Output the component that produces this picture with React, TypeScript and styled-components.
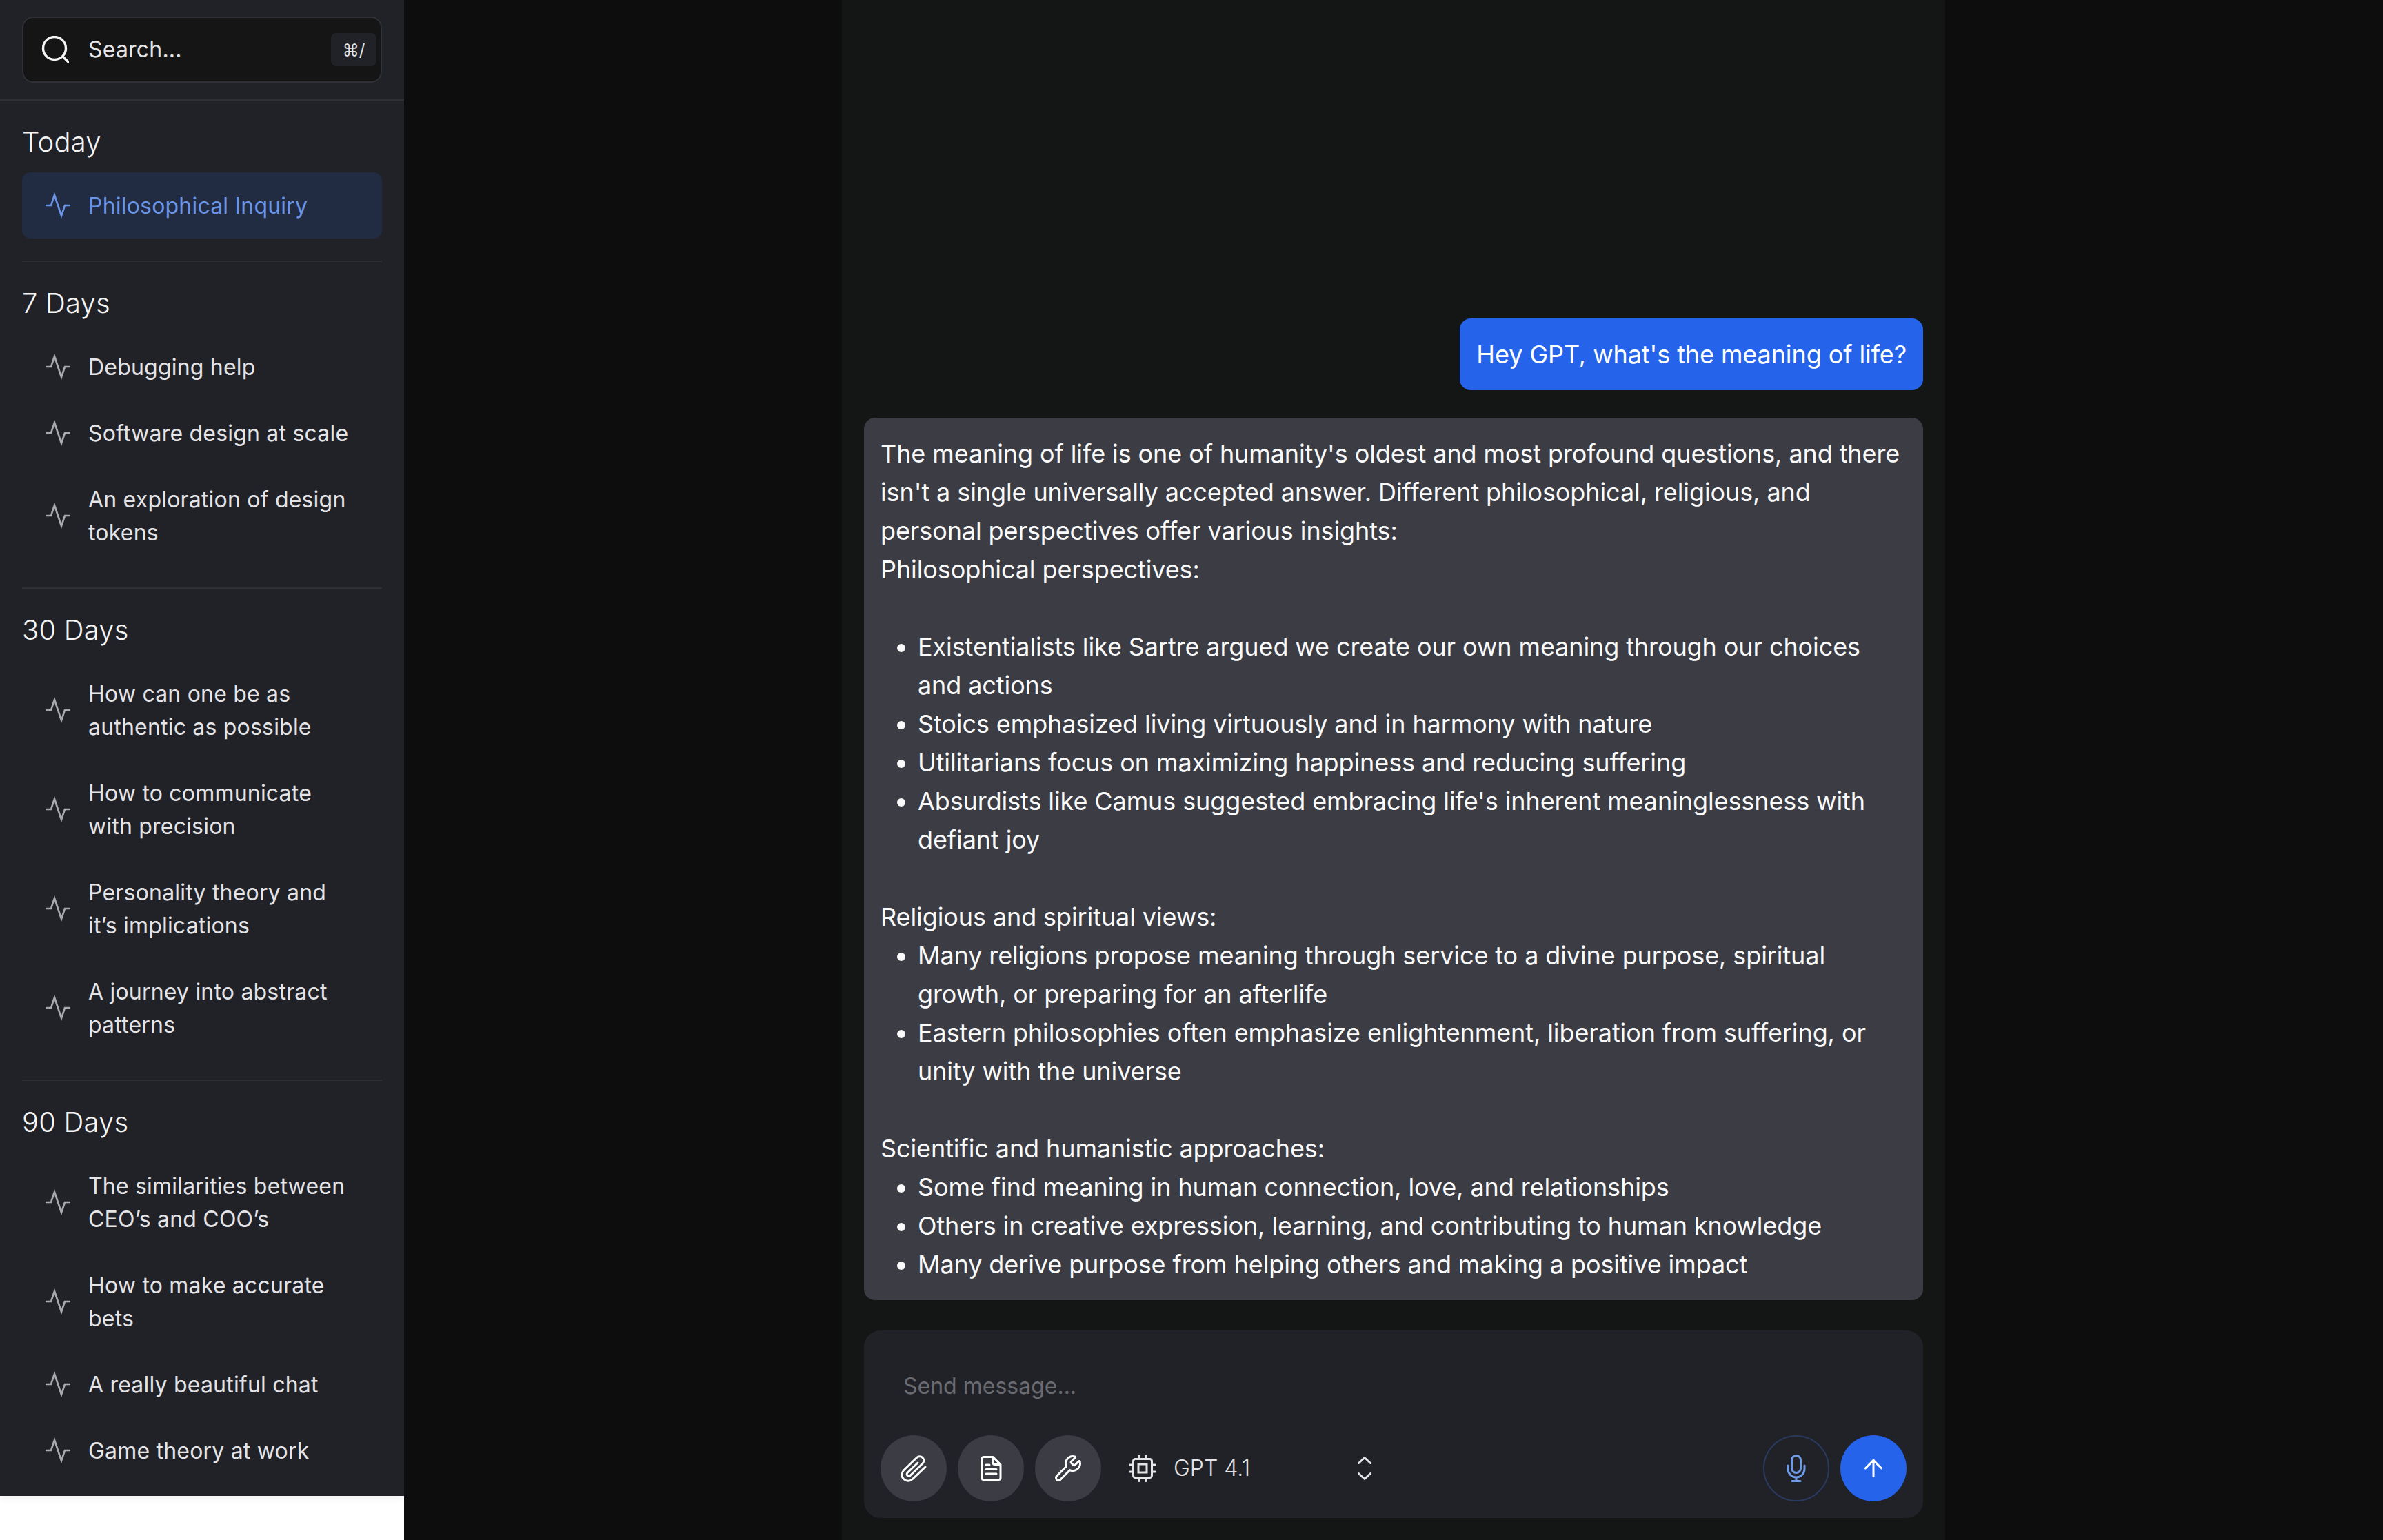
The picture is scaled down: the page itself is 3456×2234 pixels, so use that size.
import React from "react"
import styled, { createGlobalStyle } from "styled-components"
import { ArrowUp, Wrench } from "lucide-react"

const GlobalStyle = createGlobalStyle`
  html, body {
    margin: 0;
    padding: 0;
    background: #fff;
    font-family: Inter, "Noto Sans", sans-serif;
  }
  * {
    box-sizing: border-box;
  }
`

const Page = styled.div`
  display: grid;
  grid-template-columns: 586px 1fr;
  height: 100vh;
  overflow: hidden;
`

const Sidebar = styled.aside`
  align-self: start;
  background: #212227;
  padding-bottom: 18px;
  box-shadow: 0 4px 10px rgba(0, 0, 0, 0.06);
`

const SearchArea = styled.div`
  padding: 24px 32px;
  border-bottom: 2px solid #2e2f34;
`

const SearchBox = styled.div`
  display: flex;
  align-items: center;
  gap: 28px;
  height: 96px;
  padding: 0 6px 0 26px;
  background: #151515;
  border: 2px solid #303136;
  border-radius: 16px;
`

const SearchLabel = styled.span`
  flex: 1;
  font-size: 32px;
  line-height: 48px;
  letter-spacing: 0.2px;
  color: #e4e4e7;
`

const Kbd = styled.span`
  display: flex;
  align-items: center;
  justify-content: center;
  width: 66px;
  height: 48px;
  border-radius: 8px;
  background: #212227;
  color: #e4e4e7;
  font-size: 24px;
`

const Section = styled.section<{ $last?: boolean }>`
  margin: 0 32px;
  padding: 32px 0;
  border-bottom: ${({ $last }) => ($last ? "none" : "2px solid #2e2f34")};
  ${({ $last }) => $last && "padding-bottom: 0;"}
`

const SectionTitle = styled.h2`
  margin: 0 0 16px;
  font-size: 40px;
  line-height: 56px;
  font-weight: 300;
  letter-spacing: 0.2px;
  color: #f4f4f5;
`

const ChatRow = styled.div<{ $active?: boolean }>`
  display: flex;
  align-items: center;
  gap: 24px;
  padding: 24px 32px;
  border-radius: 12px;
  background: ${({ $active }) => ($active ? "#212b42" : "transparent")};
  color: ${({ $active }) => ($active ? "#6a94e6" : "#e4e4e7")};
  font-size: 32px;
  line-height: 48px;
  letter-spacing: 0.2px;

  svg {
    flex-shrink: 0;
    color: ${({ $active }) => ($active ? "#6a94e6" : "#a9aaae")};
  }
`

const ChatTitle = styled.span`
  margin: 1px 0 -1px;
`

const Main = styled.main`
  display: flex;
  justify-content: center;
  height: 100vh;
  background: #0d0d0d;
`

const Column = styled.div`
  display: flex;
  flex-direction: column;
  justify-content: flex-end;
  width: 1600px;
  padding: 32px;
  background: #141616;
`

const UserBubble = styled.div`
  align-self: flex-end;
  margin-bottom: 40px;
  padding: 24px;
  border-radius: 16px;
  background: #2563eb;
  color: #fff;
  font-size: 36px;
  line-height: 56px;
  letter-spacing: -0.1px;
`

const ReplyBubble = styled.div`
  margin-bottom: 44px;
  padding: 24px;
  border-radius: 16px;
  background: #3b3c44;
  color: #fafafa;
  font-size: 36px;
  line-height: 56px;
  letter-spacing: -0.1px;
`

const Paragraph = styled.p<{ $spaced?: boolean }>`
  margin: ${({ $spaced }) => ($spaced ? "56px 0 0" : "0")};
`

const List = styled.ul<{ $spaced?: boolean }>`
  margin: ${({ $spaced }) => ($spaced ? "56px 0 0" : "0")};
  padding: 0 0 0 54px;
`

const Composer = styled.div`
  height: 272px;
  padding: 57px 24px 24px;
  border-radius: 24px;
  background: #212227;
`

const Placeholder = styled.div`
  margin: 0 33px 47px;
  font-size: 32px;
  line-height: 48px;
  color: #6a6b71;
`

const Toolbar = styled.div`
  display: flex;
  align-items: center;
  gap: 16px;
`

const RoundButton = styled.button<{ $variant?: "tool" | "mic" | "send" }>`
  display: flex;
  align-items: center;
  justify-content: center;
  width: 96px;
  height: 96px;
  padding: 0;
  border-radius: 50%;
  border: ${({ $variant }) =>
    $variant === "mic" ? "2px solid #2a3a5e" : "none"};
  background: ${({ $variant }) =>
    $variant === "send"
      ? "#2563eb"
      : $variant === "mic"
        ? "transparent"
        : "#3b3c44"};
  color: ${({ $variant }) => ($variant === "mic" ? "#6f9ae6" : "#fff")};
`

const ModelPicker = styled.div`
  display: flex;
  align-items: center;
  gap: 25px;
  width: 362px;
  margin-left: 24px;
  color: #e4e4e7;
  font-size: 32px;
  line-height: 48px;
  font-weight: 300;

  svg:last-child {
    margin-left: auto;
  }
`

const ToolbarEnd = styled.div`
  display: flex;
  gap: 16px;
  margin-left: auto;
`

const PulseIcon = () => (
  <svg width="40" height="40" viewBox="0 0 24 24" fill="none" stroke="currentColor" strokeWidth="1.6" strokeLinecap="round" strokeLinejoin="miter">
    <polyline points="22 12 18 12 15 21 9 3 6 12 2 12" />
  </svg>
)

const SearchIcon = () => (
  <svg width="40" height="40" viewBox="0 0 40 40" fill="none" stroke="#f4f4f5" strokeWidth="3.4" strokeLinecap="round">
    <circle cx="19" cy="18" r="16.5" />
    <path d="M31 30l8 8" />
  </svg>
)

const ClipIcon = () => (
  <svg width="40" height="40" viewBox="0 0 40 40" fill="none" stroke="currentColor" strokeWidth="3" strokeLinecap="round" strokeLinejoin="round">
    <path d="M37 18 18.500 35.500a9 9 0 0 1-13-12.500L24.500 4.500a6 6 0 0 1 8.500 8.500L15 30.500a2.800 2.800 0 0 1-4-4L26 12" />
  </svg>
)

const DocIcon = () => (
  <svg width="40" height="40" viewBox="0 0 40 40" fill="none" stroke="currentColor" strokeWidth="3" strokeLinecap="round" strokeLinejoin="round">
    <path d="M9.500 3.500H23L34 14.500V34a2.500 2.500 0 0 1-2.500 2.500h-22A2.500 2.500 0 0 1 7 34V6a2.500 2.500 0 0 1 2.500-2.500z" />
    <path d="M23 4v8a2.500 2.500 0 0 0 2.500 2.500H33" />
    <path d="M13 15h5M13 21.500h15M13 28h15" />
  </svg>
)

const ChipIcon = () => (
  <svg width="40" height="40" viewBox="0 0 40 40" fill="none" stroke="currentColor" strokeWidth="3" strokeLinecap="round" strokeLinejoin="round">
    <rect x="6.500" y="6.500" width="27" height="27" rx="3" />
    <rect x="14" y="14" width="12" height="12" strokeLinejoin="miter" />
    <path d="M15 1.500v5M25 1.500v5M15 33.500v5M25 33.500v5M1.500 15h5M1.500 25h5M33.500 15h5M33.500 25h5" />
  </svg>
)

const UpDownIcon = () => (
  <svg width="40" height="40" viewBox="0 0 40 40" fill="none" stroke="currentColor" strokeWidth="3" strokeLinecap="round" strokeLinejoin="round">
    <path d="M11.500 12.500 20 4.500l8.500 8M11.500 27.500l8.500 8 8.500-8" />
  </svg>
)

const MicIcon = () => (
  <svg width="40" height="40" viewBox="0 0 40 40" fill="none" stroke="currentColor" strokeWidth="3" strokeLinecap="round" strokeLinejoin="round">
    <rect x="13.500" y="1.500" width="13" height="25" rx="6.500" />
    <path d="M8 16v5a12 12 0 0 0 24 0v-5M20 33v5M14 38.500h12" />
  </svg>
)

const history = [
  {
    title: "Today",
    chats: [["Philosophical Inquiry"]],
  },
  {
    title: "7 Days",
    chats: [
      ["Debugging help"],
      ["Software design at scale"],
      ["An exploration of design", "tokens"],
    ],
  },
  {
    title: "30 Days",
    chats: [
      ["How can one be as", "authentic as possible"],
      ["How to communicate", "with precision"],
      ["Personality theory and", "it’s implications"],
      ["A journey into abstract", "patterns"],
    ],
  },
  {
    title: "90 Days",
    chats: [
      ["The similarities between", "CEO’s and COO’s"],
      ["How to make accurate", "bets"],
      ["A really beautiful chat"],
      ["Game theory at work"],
    ],
  },
]

const App: React.FC = () => {
  return (
    <Page>
      <GlobalStyle />
      <Sidebar>
        <SearchArea>
          <SearchBox>
            <SearchIcon />
            <SearchLabel>Search...</SearchLabel>
            <Kbd>⌘/</Kbd>
          </SearchBox>
        </SearchArea>
        {history.map((group, groupIndex) => (
          <Section key={group.title} $last={groupIndex === history.length - 1}>
            <SectionTitle>{group.title}</SectionTitle>
            {group.chats.map((lines) => (
              <ChatRow key={lines[0]} $active={groupIndex === 0}>
                <PulseIcon />
                <ChatTitle>
                  {lines[0]}
                  {lines[1] && <br />}
                  {lines[1]}
                </ChatTitle>
              </ChatRow>
            ))}
          </Section>
        ))}
      </Sidebar>
      <Main>
        <Column>
          <UserBubble>Hey GPT, what's the meaning of life?</UserBubble>
          <ReplyBubble>
            <Paragraph>
              The meaning of life is one of humanity's oldest and most profound
              questions, and there isn't a single universally accepted answer.
              Different philosophical, religious, and personal perspectives
              offer various insights:
            </Paragraph>
            <Paragraph>Philosophical perspectives:</Paragraph>
            <List $spaced>
              <li>
                Existentialists like Sartre argued we create our own meaning
                through our choices and actions
              </li>
              <li>Stoics emphasized living virtuously and in harmony with nature</li>
              <li>Utilitarians focus on maximizing happiness and reducing suffering</li>
              <li>
                Absurdists like Camus suggested embracing life's inherent
                meaninglessness with defiant joy
              </li>
            </List>
            <Paragraph $spaced>Religious and spiritual views:</Paragraph>
            <List>
              <li>
                Many religions propose meaning through service to a divine
                purpose, spiritual growth, or preparing for an afterlife
              </li>
              <li>
                Eastern philosophies often emphasize enlightenment, liberation
                from suffering, or unity with the universe
              </li>
            </List>
            <Paragraph $spaced>Scientific and humanistic approaches:</Paragraph>
            <List>
              <li>Some find meaning in human connection, love, and relationships</li>
              <li>
                Others in creative expression, learning, and contributing to
                human knowledge
              </li>
              <li>Many derive purpose from helping others and making a positive impact</li>
            </List>
          </ReplyBubble>
          <Composer>
            <Placeholder>Send message...</Placeholder>
            <Toolbar>
              <RoundButton>
                <ClipIcon />
              </RoundButton>
              <RoundButton>
                <DocIcon />
              </RoundButton>
              <RoundButton>
                <Wrench size={42} strokeWidth={1.7} />
              </RoundButton>
              <ModelPicker>
                <ChipIcon />
                <span>GPT 4.1</span>
                <UpDownIcon />
              </ModelPicker>
              <ToolbarEnd>
                <RoundButton $variant="mic">
                  <MicIcon />
                </RoundButton>
                <RoundButton $variant="send">
                  <ArrowUp size={40} strokeWidth={1.8} />
                </RoundButton>
              </ToolbarEnd>
            </Toolbar>
          </Composer>
        </Column>
      </Main>
    </Page>
  )
}

export default App
